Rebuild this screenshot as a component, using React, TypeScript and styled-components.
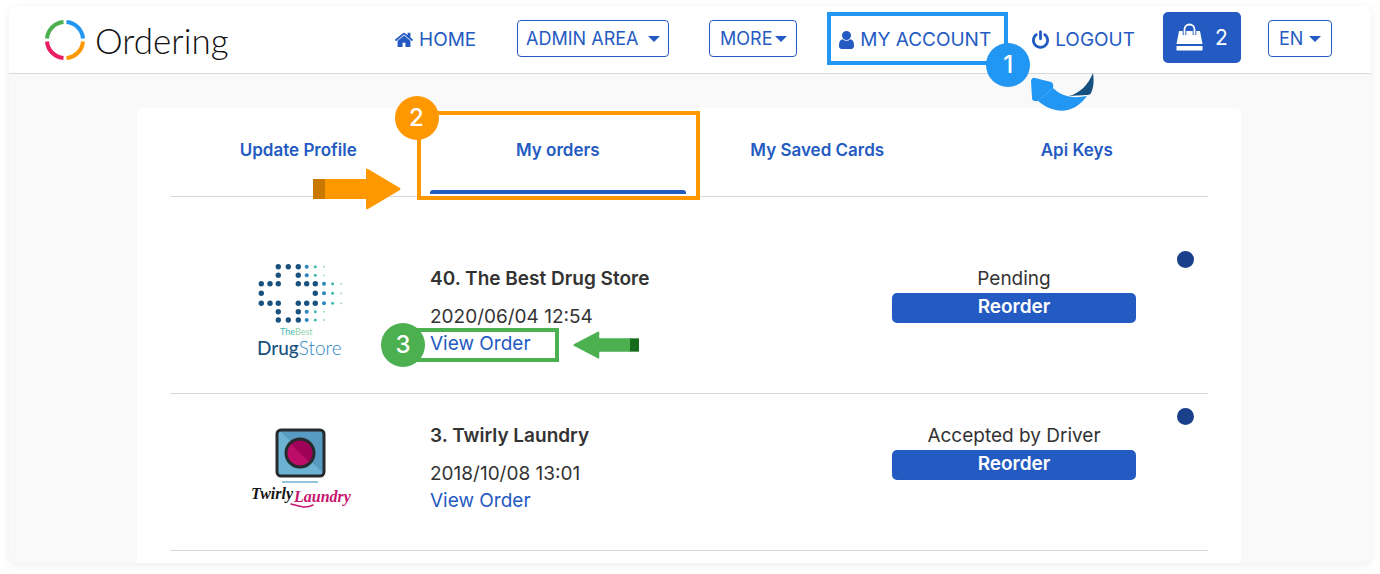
import React from "react";
import styled, { createGlobalStyle, css } from "styled-components";

const blue = "#245bc2";
const sky = "#2196f3";
const orange = "#ff9800";
const green = "#4caf50";
const rule = "#d8d8d8";

const GlobalStyle = createGlobalStyle`
  *, *::before, *::after { box-sizing: border-box; }
  body { margin: 0; background: #fff; color: #333; font-family: Inter, "Open Sans", sans-serif; font-size: 19px; }
  button, select { font: inherit; color: inherit; }
  a { color: inherit; text-decoration: none; }
  h2, p, ul { margin: 0; padding: 0; }
`;

const Page = styled.div`
  padding: 6px 9px 12px;
`;

const Window = styled.div`
  background: #f9f9f9;
  border-radius: 8px;
  overflow: hidden;
  box-shadow: 0 2px 8px rgba(0, 0, 0, 0.08);
`;

const Header = styled.header`
  display: flex;
  align-items: center;
  justify-content: space-between;
  height: 68px;
  padding: 0 39px 0 36px;
  background: #fff;
  border-bottom: 1px solid ${rule};
`;

const Brand = styled.a`
  display: flex;
  align-items: center;
  gap: 10px;
  color: #111;
  font-family: Lato, sans-serif;
  font-size: 35px;
  font-weight: 300;
`;

const Nav = styled.nav`
  display: flex;
  align-items: center;
  padding-bottom: 2px;
  color: ${blue};
`;

const NavLink = styled.a<{ $space: number }>`
  position: relative;
  display: flex;
  align-items: center;
  gap: 6px;
  margin-right: ${(p) => p.$space}px;
  padding-top: 2px;
`;

const pill = css`
  height: 37px;
  border: 1px solid ${blue};
  border-radius: 4px;
  background: #fff;
  color: ${blue};
  font-size: 18px;
`;

const MenuButton = styled.button<{ $width: number; $gap: number; $space: number }>`
  ${pill}
  display: flex;
  align-items: center;
  justify-content: center;
  gap: ${(p) => p.$gap}px;
  width: ${(p) => p.$width}px;
  margin-right: ${(p) => p.$space}px;
  padding: 0;
`;

const Caret = styled.span`
  border: 6px solid transparent;
  border-top-color: ${blue};
  border-bottom: 0;
`;

const CartButton = styled.button`
  display: flex;
  align-items: center;
  justify-content: center;
  gap: 12px;
  width: 78px;
  height: 51px;
  margin: 0 27px 3px 0;
  padding: 0;
  border: 0;
  border-radius: 5px;
  background: ${blue};
  color: #fff;
  font-size: 21px;
`;

const Language = styled.label`
  ${pill}
  display: flex;
  align-items: center;
  width: 64px;
  padding: 0 10px;
`;

const LanguageSelect = styled.select`
  flex: 1;
  min-width: 0;
  padding: 0;
  border: 0;
  background: none;
  appearance: none;
`;

const Marker = styled.span<{ $color: string }>`
  position: absolute;
  display: flex;
  align-items: center;
  justify-content: center;
  width: 44px;
  height: 44px;
  border-radius: 50%;
  background: ${(p) => p.$color};
  color: #fff;
  font-size: 24px;
  font-weight: 500;
  line-height: 1;
`;

const AccountFrame = styled.span`
  position: absolute;
  inset: -14px -17px -14px -12px;
  border: 4px solid ${sky};
  z-index: 1;

  ${Marker} { right: -26px; bottom: -26px; }
  svg { position: absolute; right: -92px; top: 57px; }
`;

const TabFrame = styled.span`
  position: absolute;
  inset: 3px -11px -4px -13px;
  border: 4px solid ${orange};

  ${Marker} { left: -26px; top: -19px; }
  svg { position: absolute; left: -108px; bottom: -14px; }
`;

const OrderFrame = styled.span`
  position: absolute;
  inset: -3px -28px -5px -28px;
  border: 4px solid ${green};

  ${Marker} { left: -25px; top: -9px; }
  svg { position: absolute; right: -84px; top: -1px; }
`;

const Panel = styled.main`
  margin: 34px 130px 0 128px;
  padding: 0 33px 12px;
  border-radius: 6px 6px 0 0;
  background: #fff;
`;

const Tabs = styled.div`
  display: grid;
  grid-template-columns: repeat(4, 1fr);
  height: 89px;
  margin-bottom: 40px;
  border-bottom: 1px solid ${rule};
`;

const Tab = styled.button<{ $active?: boolean }>`
  position: relative;
  padding: 0 3px 4px 0;
  border: 0;
  background: none;
  color: ${blue};
  font-size: 17px;
  font-weight: 600;

  &::after {
    content: "";
    position: absolute;
    left: 0;
    right: 3px;
    bottom: 2px;
    height: 4px;
    border-radius: 3px 3px 0 0;
    background: ${(p) => (p.$active ? blue : "transparent")};
  }
`;

const OrderList = styled.ul`
  list-style: none;
`;

const OrderRow = styled.li`
  display: grid;
  grid-template-columns: 260fr 462fr 244fr 72fr;
  height: 157px;
  border-bottom: 1px solid ${rule};
`;

const StoreLogo = styled.div`
  display: flex;
  justify-content: center;
  padding-top: 19px;
`;

const Details = styled.div`
  padding-top: 28px;
  line-height: 28px;
`;

const StoreName = styled.h2`
  margin-bottom: 10px;
  font-size: 19px;
  font-weight: 600;
`;

const ViewLink = styled.a`
  position: relative;
  display: block;
  width: fit-content;
  color: ${blue};
  line-height: 26px;
`;

const Status = styled.div`
  padding-top: 28px;
  line-height: 28px;
  text-align: center;
`;

const Reorder = styled.button`
  width: 100%;
  height: 30px;
  padding: 0 0 2px;
  border: 0;
  border-radius: 5px;
  background: ${blue};
  color: #fff;
  font-weight: 600;
`;

const Dot = styled.span`
  justify-self: end;
  width: 17px;
  height: 17px;
  margin: 14px 14px 0 0;
  border-radius: 50%;
  background: #1b408b;
`;

function RingLogo() {
  const arcs = [
    ["M18.500 2A18 18 0 0 0 2 18.500", "#4caf50"],
    ["M21.500 2A18 18 0 0 1 38 18.500", "#2196f3"],
    ["M38 21.500A18 18 0 0 1 21.500 38", "#ff9800"],
    ["M18.500 38A18 18 0 0 1 2 21.500", "#e91e63"],
  ];
  return (
    <svg width="40" height="40" viewBox="0 0 40 40" fill="none" strokeWidth="4" aria-hidden="true">
      {arcs.map(([d, c]) => <path key={c} d={d} stroke={c} />)}
    </svg>
  );
}

function HomeIcon() {
  return (
    <svg width="18" height="17" viewBox="90 178 1612 1380" fill="currentColor" aria-hidden="true">
      <path d="M1472 992v480q0 26-19 45t-45 19h-384v-384h-256v384h-384q-26 0-45-19t-19-45v-480q0-1 .5-3t.5-3l575-474 575 474q1 2 1 6zm223-69l-62 74q-8 9-21 11h-3q-13 0-21-7l-692-577-692 577q-12 8-24 7-13-2-21-11l-62-74q-8-10-7-23.500t11-21.500l719-599q32-26 76-26t76 26l244 204v-195q0-14 9-23t23-9h192q14 0 23 9t9 23v408l219 182q10 8 11 21.500t-7 23.500z" />
    </svg>
  );
}

function UserIcon() {
  return (
    <svg width="15" height="18" viewBox="256 128 1280 1536" fill="currentColor" aria-hidden="true">
      <path d="M1536 1399q0 109-62.500 187t-150.500 78h-854q-88 0-150.500-78t-62.500-187q0-85 8.500-160.500t31.500-152 58.500-131 94-89 134.500-34.500q131 128 313 128t313-128q76 0 134.500 34.500t94 89 58.500 131 31.500 152 8.500 160.500zm-256-887q0 159-112.500 271.500t-271.500 112.500-271.500-112.500-112.500-271.500 112.500-271.500 271.500-112.500 271.500 112.500 112.500 271.500z" />
    </svg>
  );
}

function PowerIcon() {
  return (
    <svg width="17" height="19" viewBox="128 0 1536 1664" fill="currentColor" aria-hidden="true">
      <path d="M1664 896q0 156-61 298t-164 245-245 164-298 61-298-61-245-164-164-245-61-298q0-182 80.500-343t226.500-270q43-32 95.500-25t83.500 50q32 42 24.500 94.500t-49.500 84.500q-98 74-151.500 181t-53.500 228q0 104 40.500 198.500t109.500 163.500 163.500 109.500 198.500 40.500 198.500-40.500 163.500-109.500 109.500-163.500 40.500-198.500q0-121-53.500-228t-151.500-181q-42-32-49.500-84.500t24.500-94.500q31-43 84-50t95 25q146 109 226.500 270t80.500 343zm-640-768v640q0 52-38 90t-90 38-90-38-38-90v-640q0-52 38-90t90-38 90 38 38 90z" />
    </svg>
  );
}

function Bag() {
  return (
    <svg width="27" height="28" viewBox="0 0 27 28" aria-hidden="true">
      <path d="M3 8H24L26.500 21H.5Z M.5 23H26.500V27.500H.5Z" fill="#fff" />
      <path d="M8.500 12V6.500a5 5 0 0 1 10 0V12" fill="none" stroke={blue} strokeWidth="3.600" />
      <path d="M8.500 11V6.500a5 5 0 0 1 10 0V11" fill="none" stroke="#fff" strokeWidth="1.800" strokeLinecap="round" />
    </svg>
  );
}

const solid = "#19517f";
const mid = "#2f86bf";
const teal = "#3fb8ae";
const pale = "#8fd3a8";

function DrugStoreLogo() {
  const rows: { y: number; dark: number[]; from: number }[] = [
    { y: 10.7, dark: [33.3, 43.3, 53.3], from: 61.7 },
    { y: 19.3, dark: [33.3, 53.3], from: 61.7 },
    { y: 27.7, dark: [16.3, 25, 33.3, 53.3, 61.7, 70.3], from: 79 },
    { y: 37.3, dark: [16.3, 70.3], from: 79 },
    { y: 47.3, dark: [16.3, 25, 33.3, 53.3, 61.7, 70.3], from: 79 },
    { y: 55.7, dark: [33.3, 53.3], from: 61.7 },
    { y: 64, dark: [33.3, 43.3, 53.3], from: 61.7 },
  ];
  const fade: [string, number][] = [[mid, 2], [teal, 1.5], [pale, 0.9]];
  return (
    <svg width="110" height="110" viewBox="0 0 110 110" role="img" aria-label="The Best Drug Store">
      {rows.map((r) => (
        <g key={r.y}>
          {r.dark.map((x) => <circle key={x} cx={x} cy={r.y} r="2.7" fill={solid} />)}
          {fade.map(([c, s], i) => <circle key={c} cx={r.from + i * 8.6} cy={r.y} r={s} fill={c} />)}
        </g>
      ))}
      <text x="35" y="79" fontFamily="Lato" fontSize="9" fill={teal}>The<tspan fill={pale}>Best</tspan></text>
      <text x="12" y="99" fontFamily="Lato" fontSize="19" fill={solid} fontWeight="500">Drug<tspan fill={mid} fontWeight="300">Store</tspan></text>
    </svg>
  );
}

function LaundryLogo() {
  return (
    <svg width="110" height="110" viewBox="0 0 110 110" role="img" aria-label="Twirly Laundry">
      <rect x="32" y="17" width="47" height="46" rx="4" fill="#6cb2d2" />
      <path d="M34 17H79V61Z" fill="#589bc2" />
      <rect x="32" y="17" width="47" height="46" rx="4" fill="none" stroke="#262b2e" strokeWidth="3" />
      <circle cx="55" cy="40" r="14" fill="#bd0d69" />
      <path d="M45.100 30.100A14 14 0 0 1 64.900 49.900Z" fill="#9f0058" />
      <circle cx="55" cy="40" r="14" fill="none" stroke="#262b2e" strokeWidth="3" />
      <path d="M37 69H73" stroke="#6cb2d2" strokeWidth="1.500" />
      <text x="6" y="86" fontFamily="Liberation Serif" fontStyle="italic" fontWeight="700" fontSize="16" fill="#151515">Twirly</text>
      <text x="49" y="89" fontFamily="Liberation Serif" fontStyle="italic" fontWeight="700" fontSize="16" fill="#c7156f">Laundry</text>
      <path d="M46 91C54 93 60 96 68 92" fill="none" stroke="#c7156f" strokeWidth="1.500" strokeLinecap="round" />
    </svg>
  );
}

function CurvedArrow() {
  return (
    <svg width="66" height="40" viewBox="0 0 66 40" aria-hidden="true">
      <path d="M63 0C64 7 64 14 61 20Q60 22 56 22L39 23C50 20 58 12 63 0Z" fill="#16507f" />
      <path d="M1 8Q2 4 5 5L21 9Q24 10 23 15C31 23 42 26 57 23C45 40 26 43 8 28L5 28Q2 28 2 25Z" fill={sky} />
      <path d="M23 15L8 28" stroke="#6dbaf7" strokeWidth=".5" />
    </svg>
  );
}

function StraightArrow({ width, height, color, tail, flip }: { width: number; height: number; color: string; tail: string; flip?: boolean }) {
  return (
    <svg width={width} height={height} viewBox="0 0 88 42" preserveAspectRatio="none" aria-hidden="true">
      <g transform={flip ? "matrix(-1 0 0 1 88 0)" : undefined}>
        <path d="M0 11H13V31H0Z" fill={tail} />
        <path d="M12 11H53V2Q53 0 55 1L87 20Q88 21 87 22L55 41Q53 42 53 40V31H12Z" fill={color} />
      </g>
    </svg>
  );
}

const tabs = ["Update Profile", "My orders", "My Saved Cards", "Api Keys"];

const orders = [
  { name: "40. The Best Drug Store", date: "2020/06/04 12:54", status: "Pending", Logo: DrugStoreLogo, marked: true },
  { name: "3. Twirly Laundry", date: "2018/10/08 13:01", status: "Accepted by Driver", Logo: LaundryLogo, marked: false },
];

export default function App() {
  return (
    <Page>
      <GlobalStyle />
      <Window>
        <Header>
          <Brand href="#"><RingLogo />Ordering</Brand>
          <Nav>
            <NavLink href="#" $space={41}><HomeIcon />HOME</NavLink>
            <MenuButton $width={152} $gap={10} $space={40} aria-haspopup="menu">ADMIN AREA<Caret /></MenuButton>
            <MenuButton $width={88} $gap={2} $space={42} aria-haspopup="menu">MORE<Caret /></MenuButton>
            <NavLink href="#" $space={41}>
              <UserIcon />MY ACCOUNT
              <AccountFrame>
                <Marker $color={sky}>1</Marker>
                <CurvedArrow />
              </AccountFrame>
            </NavLink>
            <NavLink href="#" $space={28}><PowerIcon />LOGOUT</NavLink>
            <CartButton aria-label="Cart, 2 items"><Bag />2</CartButton>
            <Language>
              <LanguageSelect aria-label="Language"><option>EN</option></LanguageSelect>
              <Caret />
            </Language>
          </Nav>
        </Header>
        <Panel>
          <Tabs role="tablist">
            {tabs.map((t, i) => (
              <Tab key={t} role="tab" aria-selected={i === 1} $active={i === 1}>
                {t}
                {i === 1 && (
                  <TabFrame>
                    <Marker $color={orange}>2</Marker>
                    <StraightArrow width={88} height={42} color={orange} tail="#c97800" />
                  </TabFrame>
                )}
              </Tab>
            ))}
          </Tabs>
          <OrderList>
            {orders.map(({ name, date, status, Logo, marked }) => (
              <OrderRow key={name}>
                <StoreLogo><Logo /></StoreLogo>
                <Details>
                  <StoreName>{name}</StoreName>
                  <p>{date}</p>
                  <ViewLink href="#">
                    {marked && (
                      <OrderFrame>
                        <Marker $color={green}>3</Marker>
                        <StraightArrow width={66} height={28} color={green} tail="#176b1c" flip />
                      </OrderFrame>
                    )}
                    View Order
                  </ViewLink>
                </Details>
                <Status>
                  <p>{status}</p>
                  <Reorder>Reorder</Reorder>
                </Status>
                <Dot />
              </OrderRow>
            ))}
          </OrderList>
        </Panel>
      </Window>
    </Page>
  );
}
